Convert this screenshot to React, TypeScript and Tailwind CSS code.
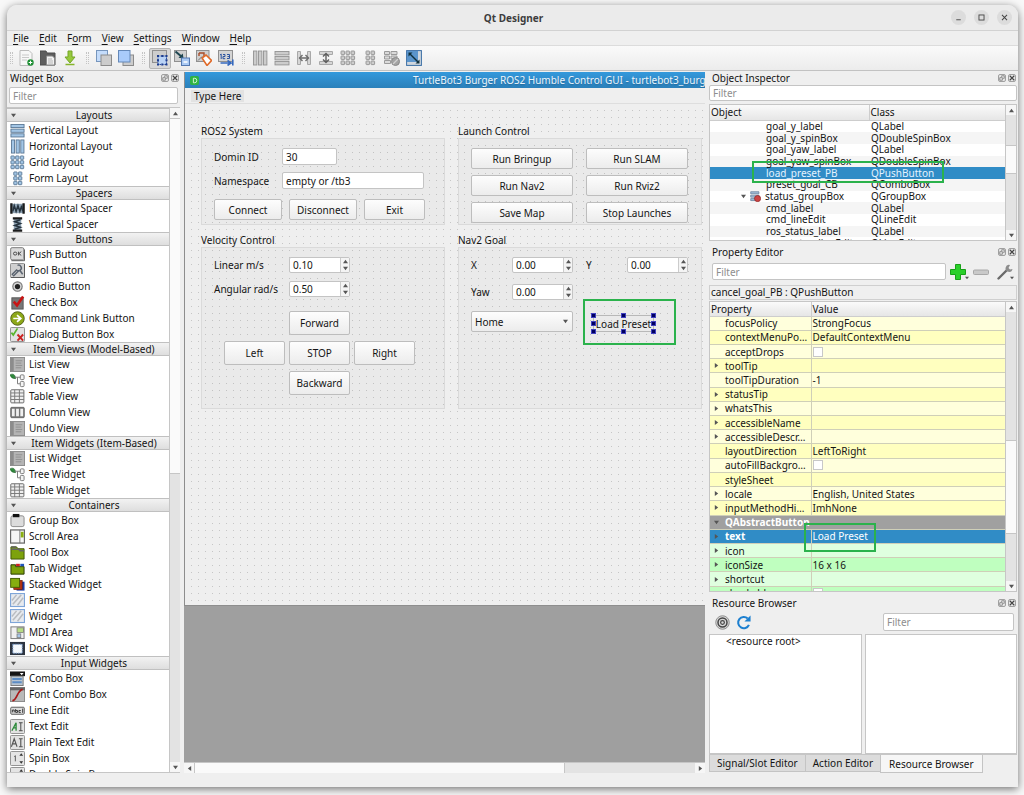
import type { ReactNode } from "react";
import clsx from "clsx";

type IconProps = { children: ReactNode; className?: string };

function Icon({ children, className }: IconProps) {
  return (
    <svg viewBox="0 0 16 16" aria-hidden="true" className={clsx("shrink-0", className ?? "size-[15px]")}>
      {children}
    </svg>
  );
}

function Arrow({ dir, className }: { dir: "up" | "down" | "left" | "right"; className?: string }) {
  const points = {
    up: "0,5 3,1 6,5",
    down: "0,1 6,1 3,5",
    left: "5,0 1,3 5,6",
    right: "1,0 5,3 1,6",
  };
  return (
    <svg viewBox="0 0 6 6" aria-hidden="true" className={clsx("shrink-0 fill-[#555]", className ?? "size-[5px]")}>
      <polygon points={points[dir]} />
    </svg>
  );
}

/* ---------- icon drawings ---------- */

function Frame16({ fill = "#d6d6d6" }: { fill?: string }) {
  return <rect x="0.5" y="0.5" width="15" height="15" rx="1" fill={fill} stroke="#8b8b8b" />;
}

function Bars({ vertical, fill, stroke }: { vertical?: boolean; fill: string; stroke: string }) {
  return (
    <>
      {[1, 6, 11].map((p) =>
        vertical ? (
          <rect key={p} x={p + 0.5} y="1" width="3.4" height="14" fill={fill} stroke={stroke} strokeWidth="0.9" />
        ) : (
          <rect key={p} x="1" y={p + 0.5} width="14" height="3.4" fill={fill} stroke={stroke} strokeWidth="0.9" />
        ),
      )}
    </>
  );
}

function Cells({ cols, fill, stroke }: { cols: number[]; fill: string; stroke: string }) {
  return (
    <>
      {cols.map((x) =>
        [1, 6, 11].map((y) => (
          <rect key={`${x}-${y}`} x={x} y={y} width="3.6" height="3.6" rx="0.6" fill={fill} stroke={stroke} strokeWidth="0.9" />
        )),
      )}
    </>
  );
}

const BLUE = { fill: "#a3c6e6", stroke: "#54728f" };
const GREY = { fill: "#cccccc", stroke: "#939393" };

const listIcon = (
  <>
    <rect x="0.5" y="0.5" width="15" height="15" fill="#b4b4b4" stroke="#8a8a8a" />
    <rect x="1" y="1" width="3" height="14" fill="#8c8c8c" />
    <path d="M6 4h7M6 6.5h6M6 9h7M6 11.5h6" stroke="#8f8f8f" />
  </>
);
const treeIcon = (
  <>
    <path d="M0 2c3-2 6 0 6 4C3 6 1 5 0 2z" fill="#2f8a3c" stroke="#1d5c28" strokeWidth="0.6" />
    <path d="M5 4.5h6M8 4.5v7h3" fill="none" stroke="#777" />
    <rect x="11" y="2" width="4" height="5" rx="1" fill="#f4f4f4" stroke="#777" />
    <rect x="11" y="9" width="4" height="5.5" rx="1" fill="#f4f4f4" stroke="#777" />
  </>
);
const tableIcon = (
  <>
    <rect x="0.8" y="0.8" width="14" height="14" rx="1" fill="#efefef" stroke="#666" />
    <path d="M1 4.2h14M1 7.7h14M1 11.2h14M5 1v14M10 1v14" stroke="#777" />
  </>
);
const hatchIcon = (
  <>
    <rect x="0.6" y="0.6" width="14.8" height="13.8" fill="#e7eaee" stroke="#7ea5d8" strokeWidth="1.2" />
    <path d="M2 8l5-6M3 12l9-10M8 13l6-8" stroke="#b9bcc0" strokeWidth="1.6" />
  </>
);

const widgetIcons: Record<string, ReactNode> = {
  "Vertical Layout": <Bars {...BLUE} />,
  "Horizontal Layout": <Bars vertical {...BLUE} />,
  "Grid Layout": <Cells cols={[1, 6, 11]} {...BLUE} />,
  "Form Layout": <Cells cols={[4, 9]} {...BLUE} />,
  "Horizontal Spacer": (
    <>
      <rect x="0.5" y="3" width="15" height="10" fill="#8fa3b4" />
      <path d="M1.5 2.5v11M14.5 2.5v11" stroke="#1c1c1c" strokeWidth="2.4" />
      <path d="M3 11l1.500-6 2 6 2-6 2 6 2-6 1 6" fill="none" stroke="#26343f" strokeWidth="1.6" />
    </>
  ),
  "Vertical Spacer": (
    <>
      <rect x="4" y="1" width="8" height="14" fill="#8fa3b4" />
      <path d="M3 1.5h10M3 14.5h10" stroke="#1c1c1c" strokeWidth="2.4" />
      <path d="M11 3L5 5l6 2-6 2 6 2-6 2" fill="none" stroke="#26343f" strokeWidth="1.6" />
    </>
  ),
  "Push Button": (
    <>
      <rect x="0.7" y="0.7" width="14" height="13" rx="1.5" fill="#dadada" stroke="#777" />
      <path d="M1.5 14.6h14v-12" fill="none" stroke="#555" />
      <ellipse cx="5.5" cy="7" rx="1.8" ry="1.6" fill="none" stroke="#444" />
      <path d="M9 5v4M12 5L9.5 7 12 9" fill="none" stroke="#444" />
    </>
  ),
  "Tool Button": (
    <>
      <Frame16 fill="#d0d0d0" />
      <path d="M15.5 1v14.5H1" fill="none" stroke="#555" />
      <path d="M8 2.5a3 3 0 1 1-1 5L2.5 12 4 13.500l5-5M11 8.500l2.500 3.500" fill="none" stroke="#5b6470" strokeWidth="1.6" />
    </>
  ),
  "Radio Button": (
    <>
      <circle cx="8" cy="8" r="5" fill="#d6d6d6" stroke="#777" strokeWidth="1.2" />
      <circle cx="8" cy="8" r="2.8" fill="#222" />
    </>
  ),
  "Check Box": (
    <>
      <rect x="2" y="3" width="12" height="12" fill="#777" stroke="#555" />
      <path d="M4 7l3.500 4L14 1.500" fill="none" stroke="#c81414" strokeWidth="2.8" />
    </>
  ),
  "Command Link Button": (
    <>
      <circle cx="8" cy="8" r="7.200" fill="#8da818" stroke="#4f5f16" />
      <path d="M3.500 8h7M7.500 4.500L11.500 8l-4 3.500" fill="none" stroke="#fff" strokeWidth="1.8" />
    </>
  ),
  "Dialog Button Box": (
    <>
      <Frame16 fill="#e2e2e2" />
      <path d="M1.500 6l2 2.500L8 1.500" fill="none" stroke="#58b52c" strokeWidth="1.800" />
      <path d="M8 8l6 6.500M14 8l-6 6.500" stroke="#cc2222" strokeWidth="2" />
    </>
  ),
  "List View": listIcon,
  "Tree View": treeIcon,
  "Table View": tableIcon,
  "Column View": (
    <>
      <rect x="0.800" y="2.500" width="14.400" height="11" rx="1" fill="#777" stroke="#666" />
      <path d="M2 4h3v8H2zM6.500 4h3v8h-3zM11 4h3v8h-3z" fill="#f0f0f0" />
    </>
  ),
  "Undo View": listIcon,
  "List Widget": listIcon,
  "Tree Widget": treeIcon,
  "Table Widget": tableIcon,
  "Group Box": (
    <>
      <rect x="1" y="3" width="14" height="11.500" rx="2" fill="#dcdcdc" stroke="#888" />
      <rect x="3" y="1" width="7" height="3.500" fill="#111" />
    </>
  ),
  "Scroll Area": (
    <>
      <rect x="0.600" y="1" width="14.800" height="14" fill="#f6f6f6" stroke="#666" strokeWidth="1.300" />
      <path d="M10.500 1v14" stroke="#777" />
      <rect x="11.500" y="3" width="3" height="6" fill="#8bb012" />
    </>
  ),
  "Tool Box": (
    <>
      <path d="M1 2h6l1.500 2H15v11H1z" fill="#7da20c" stroke="#3f5405" />
      <path d="M1.500 2h5M1.500 4.500h8l1 1.500H15" fill="none" stroke="#666" strokeWidth="1.600" />
    </>
  ),
  "Tab Widget": (
    <>
      <path d="M1 4h5v2h9v8H1z" fill="#7da20c" stroke="#263800" />
      <rect x="6.500" y="3" width="4" height="2.500" fill="#c22" />
      <rect x="11" y="3" width="4" height="2.500" fill="#2255bb" />
    </>
  ),
  "Stacked Widget": (
    <>
      <rect x="7" y="5" width="8.500" height="9.500" fill="#1c3fa8" />
      <rect x="4" y="3.500" width="9" height="10" fill="#b53214" stroke="#601505" strokeWidth="0.600" />
      <rect x="0.700" y="1.500" width="9.500" height="9.500" fill="#86ae10" stroke="#445c05" />
    </>
  ),
  Frame: hatchIcon,
  Widget: hatchIcon,
  "MDI Area": (
    <>
      <rect x="1" y="2" width="14" height="12.500" fill="#f0f0f0" stroke="#777" />
      <rect x="7.500" y="3" width="7" height="5" fill="#b7dc84" stroke="#777" strokeWidth="0.800" />
      <rect x="7.500" y="9.500" width="4" height="4" fill="#a8c8ea" stroke="#777" strokeWidth="0.800" />
    </>
  ),
  "Dock Widget": (
    <>
      <rect x="0" y="1" width="16" height="14" fill="#2d3440" />
      <rect x="3" y="3.500" width="10" height="9.500" fill="#f4f8fc" stroke="#7a9fd0" strokeDasharray="1.500 1" />
    </>
  ),
  "Combo Box": (
    <>
      <rect x="0" y="0.500" width="16" height="5" fill="#151515" />
      <path d="M10.500 2h4l-2 2.500z" fill="#fff" />
      <rect x="1" y="5.500" width="13" height="10" fill="#b8c4d0" stroke="#777" />
      <path d="M2.500 8.500h10M2.500 12h10" stroke="#5c8cc4" strokeWidth="2" />
    </>
  ),
  "Font Combo Box": (
    <>
      <rect x="0.500" y="0.500" width="15" height="15" fill="#b9b9b9" stroke="#888" />
      <path d="M0 2h16" stroke="#666" strokeWidth="3" />
      <path d="M2.500 14.500c5 0 5-11 11-12" fill="none" stroke="#a81818" strokeWidth="1.800" />
    </>
  ),
  "Line Edit": (
    <>
      <rect x="0.800" y="4.500" width="14.400" height="7.500" rx="1" fill="#dcdcdc" stroke="#555" />
      <path d="M2.500 10V7.500h2V10M6 6.500V10h2V8H6M11.500 8h-2v2h2M13.500 6v4.500" fill="none" stroke="#333" />
    </>
  ),
  "Text Edit": (
    <>
      <Frame16 fill="#e2e2e2" />
      <path d="M2 12.500L6.500 4v8.500M3.500 9.500h3" fill="none" stroke="#2c8a3a" strokeWidth="1.400" />
      <path d="M9.500 4h4M11.500 4v8.500M9.500 12.500h4" fill="none" stroke="#444" />
    </>
  ),
  "Plain Text Edit": (
    <>
      <Frame16 fill="#e2e2e2" />
      <path d="M1.500 12.500L4.500 4l3 8.500M3 9.500h3.500M9.500 4h4M11.500 4v8.500M9.500 12.500h4" fill="none" stroke="#555" strokeWidth="1.200" />
    </>
  ),
  "Spin Box": (
    <>
      <Frame16 fill="#e4e4e4" />
      <path d="M4.500 6l1.200-1v6" fill="none" stroke="#555" />
      <path d="M10 5l2-2.500L14 5zM10 11l2 2.500L14 11z" fill="#333" />
    </>
  ),
  "Double Spin Box": (
    <>
      <Frame16 fill="#e4e4e4" />
      <path d="M10 5l2-2.500L14 5z" fill="#333" />
    </>
  ),
};

const toolGroups: { label: string; active?: boolean; art: ReactNode }[][] = [
  [
    {
      label: "New",
      art: (
        <>
          <path d="M2 .5h9l3 3v12H2z" fill="#f7f7f7" stroke="#bbb" />
          <path d="M4 5h7M4 7.500h7M4 10h5" stroke="#c9c9c9" />
          <circle cx="12.500" cy="12.500" r="3.200" fill="#1f8f35" />
          <path d="M12.500 10.700v3.600M10.700 12.500h3.600" stroke="#fff" />
        </>
      ),
    },
    {
      label: "Open",
      art: (
        <>
          <path d="M0 1h6l1 2h8v12H0z" fill="#5e5e5e" stroke="#4c4c4c" />
          <path d="M6.500 6h6l2 2v7h-8z" fill="#f2f2f2" stroke="#888" />
          <path d="M8 9h4M8 11h5M8 13h5" stroke="#b5b5b5" />
        </>
      ),
    },
    {
      label: "Save",
      art: (
        <>
          <path d="M6 1h4v6h3l-5 6-5-6h3z" fill="#97c93d" stroke="#75a526" />
          <path d="M3.500 14.500h9" stroke="#86b52d" strokeWidth="1.500" />
        </>
      ),
    },
  ],
  [
    {
      label: "Send to Back",
      art: (
        <>
          <rect x="0.500" y="0.500" width="11" height="11" fill="#c4dcfb" stroke="#7796bd" />
          <rect x="5" y="5" width="10.500" height="10.500" fill="#cccccc" stroke="#8b8b8b" />
        </>
      ),
    },
    {
      label: "Bring to Front",
      art: (
        <>
          <rect x="5" y="5" width="10.500" height="10.500" fill="#cccccc" stroke="#8b8b8b" />
          <rect x="0.500" y="0.500" width="11.500" height="11.500" fill="#a9cbfa" stroke="#6488b8" />
        </>
      ),
    },
  ],
  [
    {
      label: "Edit Widgets",
      active: true,
      art: (
        <>
          <rect x="0.500" y="0.500" width="14" height="12" fill="#cdcdcd" stroke="#909090" />
          <rect x="6" y="6" width="8.500" height="8.500" fill="#b9d2f5" stroke="#2b4fa0" strokeDasharray="1.500 1" />
          <path d="M5 5h2v2H5zM9.300 5h2v2h-2zM13.500 5h2v2h-2zM5 9.300h2v2H5zM13.500 9.300h2v2h-2zM5 13.500h2v2H5zM9.300 13.500h2v2h-2zM13.500 13.500h2v2h-2z" fill="#1d3c8f" />
        </>
      ),
    },
    {
      label: "Edit Signals/Slots",
      art: (
        <>
          <rect x="0.500" y="0.500" width="12" height="11" fill="#cfcfcf" stroke="#909090" />
          <path d="M1.500 1.500L8 7" stroke="#1e4550" strokeWidth="2" />
          <path d="M9.500 8.500L4.500 7.800 8.800 3.500z" fill="#1e4550" />
          <rect x="7.500" y="8" width="8" height="7.500" fill="#a9c9f4" stroke="#5478b0" />
          <path d="M9.500 12h4" stroke="#fff" strokeWidth="1.300" />
        </>
      ),
    },
    {
      label: "Edit Buddies",
      art: (
        <>
          <rect x="0.500" y="0.500" width="12.500" height="11" fill="#cfcfcf" stroke="#909090" />
          <path d="M3 3h5v3M3 3v3" fill="none" stroke="#a84d2b" strokeWidth="1.400" />
          <path d="M6 8l4-3 5.500 5.500-4.500 5z" fill="#fff" stroke="#e06a28" strokeWidth="1.600" />
          <path d="M2 10.500l4-4" stroke="#777" />
        </>
      ),
    },
    {
      label: "Edit Tab Order",
      art: (
        <>
          <rect x="0.500" y="0.500" width="14" height="11" fill="#d4d4d4" stroke="#909090" />
          <path d="M2 5l1.200-1v5M5 4.500h2v2H5v2.200h2.200M9 4.500h2.500v4H9M9.500 6.500h2" fill="none" stroke="#2d54a0" />
          <path d="M2.500 13h9M9.500 10.500l3.500 2.500-3.500 2.500M14.800 9.500v6" fill="none" stroke="#3568bd" strokeWidth="1.600" />
        </>
      ),
    },
  ],
  [
    { label: "Lay Out Horizontally", art: <Bars vertical {...GREY} /> },
    { label: "Lay Out Vertically", art: <Bars {...GREY} /> },
    {
      label: "Lay Out Horizontally in Splitter",
      art: (
        <>
          <path d="M1.500 1.500h3v13h-3zM11.500 1.500h3v13h-3z" fill="#d6d6d6" stroke="#a8a8a8" />
          <path d="M3 8h10M6.500 5L3.500 8l3 3M9.500 5l3 3-3 3" fill="none" stroke="#6e6e6e" strokeWidth="1.400" />
        </>
      ),
    },
    {
      label: "Lay Out Vertically in Splitter",
      art: (
        <>
          <path d="M1.500 1.500h13v3h-13zM1.500 11.500h13v3h-13z" fill="#d6d6d6" stroke="#a8a8a8" />
          <path d="M8 3v10M5 6.500l3-3 3 3M5 9.500l3 3 3-3" fill="none" stroke="#5e5e5e" strokeWidth="1.400" />
        </>
      ),
    },
    { label: "Lay Out in a Grid", art: <Cells cols={[1, 6, 11]} {...GREY} /> },
    { label: "Lay Out in a Form Layout", art: <Cells cols={[4, 9]} {...GREY} /> },
    {
      label: "Break Layout",
      art: (
        <>
          <path d="M.5 1.500h5v3h-5zM7 1.500h6v3H7zM.5 6h5v3h-5zM7 6h6v3H7zM.5 10.500h6v3h-6z" fill="#dadada" stroke="#9a9a9a" />
          <circle cx="11.500" cy="11.500" r="4" fill="#a3a3a3" stroke="#888" />
          <path d="M9 14l5-5" stroke="#d0d0d0" strokeWidth="1.200" />
        </>
      ),
    },
    {
      label: "Adjust Size",
      art: (
        <>
          <rect x="0.600" y="0.600" width="14.800" height="14.800" fill="#cfd6de" stroke="#3a6ea5" />
          <rect x="1" y="1" width="11" height="11" fill="#5b95cc" />
          <path d="M4 4l8 8" stroke="#10303c" strokeWidth="1.500" />
          <path d="M2.500 2.500h4l-4 4zM13.500 13.500h-4l4-4z" fill="#10303c" />
        </>
      ),
    },
  ],
];

/* ---------- data ---------- */

const menus: [string, string, string][] = [
  ["", "F", "ile"],
  ["", "E", "dit"],
  ["F", "o", "rm"],
  ["", "V", "iew"],
  ["", "S", "ettings"],
  ["", "W", "indow"],
  ["", "H", "elp"],
];

const widgetBox = [
  { title: "Layouts", items: ["Vertical Layout", "Horizontal Layout", "Grid Layout", "Form Layout"] },
  { title: "Spacers", items: ["Horizontal Spacer", "Vertical Spacer"] },
  {
    title: "Buttons",
    items: ["Push Button", "Tool Button", "Radio Button", "Check Box", "Command Link Button", "Dialog Button Box"],
  },
  { title: "Item Views (Model-Based)", items: ["List View", "Tree View", "Table View", "Column View", "Undo View"] },
  { title: "Item Widgets (Item-Based)", items: ["List Widget", "Tree Widget", "Table Widget"] },
  {
    title: "Containers",
    items: [
      "Group Box",
      "Scroll Area",
      "Tool Box",
      "Tab Widget",
      "Stacked Widget",
      "Frame",
      "Widget",
      "MDI Area",
      "Dock Widget",
    ],
  },
  {
    title: "Input Widgets",
    items: ["Combo Box", "Font Combo Box", "Line Edit", "Text Edit", "Plain Text Edit", "Spin Box", "Double Spin Box"],
  },
];

const objects = [
  { name: "goal_y_label", cls: "QLabel" },
  { name: "goal_y_spinBox", cls: "QDoubleSpinBox" },
  { name: "goal_yaw_label", cls: "QLabel" },
  { name: "goal_yaw_spinBox", cls: "QDoubleSpinBox" },
  { name: "load_preset_PB", cls: "QPushButton", selected: true },
  { name: "preset_goal_CB", cls: "QComboBox" },
  { name: "status_groupBox", cls: "QGroupBox", group: true },
  { name: "cmd_label", cls: "QLabel" },
  { name: "cmd_lineEdit", cls: "QLineEdit" },
  { name: "ros_status_label", cls: "QLabel" },
  { name: "ros_status_lineEdit", cls: "QLineEdit" },
];

type Property = {
  name: string;
  value?: string;
  check?: boolean;
  expand?: boolean;
  tone: "light" | "dark" | "greenLight" | "greenDark" | "section" | "selected";
};

const properties: Property[] = [
  { name: "focusPolicy", value: "StrongFocus", tone: "light" },
  { name: "contextMenuPo…", value: "DefaultContextMenu", tone: "dark" },
  { name: "acceptDrops", check: true, tone: "light" },
  { name: "toolTip", expand: true, tone: "dark" },
  { name: "toolTipDuration", value: "-1", tone: "light" },
  { name: "statusTip", expand: true, tone: "dark" },
  { name: "whatsThis", expand: true, tone: "light" },
  { name: "accessibleName", expand: true, tone: "dark" },
  { name: "accessibleDescr…", expand: true, tone: "light" },
  { name: "layoutDirection", value: "LeftToRight", tone: "dark" },
  { name: "autoFillBackgro…", check: true, tone: "light" },
  { name: "styleSheet", tone: "dark" },
  { name: "locale", value: "English, United States", expand: true, tone: "light" },
  { name: "inputMethodHi…", value: "ImhNone", expand: true, tone: "dark" },
  { name: "QAbstractButton", tone: "section" },
  { name: "text", value: "Load Preset", expand: true, tone: "selected" },
  { name: "icon", expand: true, tone: "greenLight" },
  { name: "iconSize", value: "16 x 16", expand: true, tone: "greenDark" },
  { name: "shortcut", expand: true, tone: "greenLight" },
  { name: "checkable", check: true, tone: "greenDark" },
];

const toneClass: Record<Property["tone"], string> = {
  light: "bg-[#ffffdc]",
  dark: "bg-[#ffffbf]",
  greenLight: "bg-[#dfffdf]",
  greenDark: "bg-[#bfffbf]",
  section: "bg-[#a0a0a0] font-bold text-white",
  selected: "bg-[#308cc6] text-white",
};

/* ---------- shared controls ---------- */

const fieldClass = "rounded-xs border border-[#c4c4c4] bg-white px-[3px] outline-none placeholder:text-[#8e8e8e]";

function PushButton({ children, className }: { children: ReactNode; className?: string }) {
  return (
    <button
      type="button"
      className={clsx(
        "rounded-xs border border-[#bdbdbd] bg-linear-to-b from-[#fdfdfd] to-[#ececec] text-center whitespace-nowrap",
        className,
      )}
    >
      {children}
    </button>
  );
}

function SpinBox({ id, value }: { id: string; value: string }) {
  return (
    <div className="flex h-4 w-[61px] overflow-hidden rounded-xs border border-[#c4c4c4] bg-white">
      <input id={id} defaultValue={value} className="w-0 flex-1 px-[3px] outline-none" />
      <div className="flex w-[9px] flex-col border-l border-[#ccc] bg-[#f4f4f4]">
        <button type="button" aria-label="Increase" className="flex flex-1 items-center justify-center">
          <Arrow dir="up" />
        </button>
        <button type="button" aria-label="Decrease" className="flex flex-1 items-center justify-center">
          <Arrow dir="down" />
        </button>
      </div>
    </div>
  );
}

type ScrollBarProps = { horizontal?: boolean; before: number; thumb: number; after: number };

function ScrollBar({ horizontal, before, thumb, after }: ScrollBarProps) {
  const endClass = "flex size-[10px] shrink-0 items-center justify-center bg-[#f6f6f6]";
  return (
    <div
      className={clsx(
        "flex shrink-0 border-[#c6c6c6] bg-[#e3e3e3]",
        horizontal ? "h-[11px] border-t" : "w-[11px] flex-col border-l",
      )}
    >
      <button type="button" aria-label="Scroll back" className={endClass}>
        <Arrow dir={horizontal ? "left" : "up"} />
      </button>
      <div style={{ flexGrow: before }} />
      <div
        className={clsx("border-[#c6c6c6] bg-[#fafafa]", horizontal ? "border-x" : "border-y")}
        style={{ flexGrow: thumb }}
      />
      <div style={{ flexGrow: after }} />
      <button type="button" aria-label="Scroll forward" className={endClass}>
        <Arrow dir={horizontal ? "right" : "down"} />
      </button>
    </div>
  );
}

function DockTitle({ title }: { title: string }) {
  const btn = "flex size-[8px] items-center justify-center rounded-xs border border-[#a0a0a0] bg-[#e6e6e6]";
  return (
    <div className="flex h-[14px] shrink-0 items-center gap-[2px] pr-px pl-[3px]">
      <h2 className="flex-1">{title}</h2>
      <button type="button" aria-label={`Float ${title}`} className={btn}>
        <Icon className="size-[6px]">
          <path d="M2 7h7v7H2zM7 5V2h7v7h-3" fill="none" stroke="#777" strokeWidth="2" />
        </Icon>
      </button>
      <button type="button" aria-label={`Close ${title}`} className={btn}>
        <Icon className="size-[6px]">
          <path d="M2 2l12 12M14 2L2 14" stroke="#444" strokeWidth="3" />
        </Icon>
      </button>
    </div>
  );
}

/* ---------- top bars ---------- */

function TitleBar() {
  const btn = "flex size-[15px] items-center justify-center rounded-full bg-[#dcdcdc]";
  return (
    <header className="grid h-[26px] shrink-0 grid-cols-[1fr_auto_1fr] items-center border-b border-[#d2d2d2] bg-[#ebebeb] pr-[6px] pl-2">
      <h1 className="col-start-2 font-bold text-[#3d3d3d]">Qt Designer</h1>
      <div className="flex justify-end gap-2">
        <button type="button" aria-label="Minimize" className={btn}>
          <Icon className="size-[9px]">
            <path d="M4 12h8" stroke="#444" strokeWidth="1.600" />
          </Icon>
        </button>
        <button type="button" aria-label="Maximize" className={btn}>
          <Icon className="size-[9px]">
            <rect x="3.500" y="3.500" width="9" height="9" fill="none" stroke="#444" strokeWidth="1.600" />
          </Icon>
        </button>
        <button type="button" aria-label="Close" className={btn}>
          <Icon className="size-[9px]">
            <path d="M3.500 3.500l9 9M12.500 3.500l-9 9" stroke="#444" strokeWidth="1.800" />
          </Icon>
        </button>
      </div>
    </header>
  );
}

function MenuBar() {
  return (
    <nav className="flex h-[15px] shrink-0 items-center gap-[10px] border-b border-[#dcdcdc] px-[6px]">
      {menus.map(([pre, key, post]) => (
        <button key={pre + key + post} type="button">
          {pre}
          <span className="underline underline-offset-2">{key}</span>
          {post}
        </button>
      ))}
    </nav>
  );
}

function ToolBar() {
  return (
    <div className="flex h-[25px] shrink-0 items-center border-b border-[#c2c2c2] bg-linear-to-b from-[#fafafa] to-[#ececec]">
      {toolGroups.map((group, i) => (
        <div key={i} className="group flex items-center">
          <span className="flex w-3 justify-center group-first:w-2">
            <span className="h-3 w-[3px] border-x border-dotted border-[#c4c4c4]" />
          </span>
          {group.map((tool) => (
            <button
              key={tool.label}
              type="button"
              aria-label={tool.label}
              className={clsx(
                "flex h-[21px] w-[22px] items-center justify-center rounded-xs border",
                tool.active ? "border-[#b4b4b4] bg-[#d8d8d8]" : "border-transparent",
              )}
            >
              <Icon className="size-4">{tool.art}</Icon>
            </button>
          ))}
        </div>
      ))}
    </div>
  );
}

/* ---------- left dock ---------- */

function WidgetBox() {
  return (
    <aside className="flex w-[173px] shrink-0 flex-col">
      <DockTitle title="Widget Box" />
      <input
        aria-label="Filter widgets"
        placeholder="Filter"
        className={clsx(fieldClass, "mx-[2px] mt-[2px] mb-[3px] h-[17px] shrink-0")}
      />
      <div className="flex min-h-0 flex-1 border-y border-[#c6c6c6] bg-white">
        <div className="min-w-0 flex-1 overflow-hidden">
          {widgetBox.map((category) => (
            <section key={category.title}>
              <h3 className="flex h-[14px] items-center gap-[3px] border-y border-[#c0c0c0] bg-linear-to-b from-[#f2f2f2] to-[#dedede] pl-1 leading-3">
                <Arrow dir="down" />
                <span className="flex-1 text-center">{category.title}</span>
              </h3>
              <ul>
                {category.items.map((item) => (
                  <li key={item} className="flex h-4 items-center gap-1 pl-[3px] whitespace-nowrap">
                    <Icon>{widgetIcons[item]}</Icon>
                    {item}
                  </li>
                ))}
              </ul>
            </section>
          ))}
        </div>
        <ScrollBar before={0} thumb={356} after={290} />
      </div>
    </aside>
  );
}

/* ---------- form being edited ---------- */

function GroupBox({ title, children, className }: { title: string; children: ReactNode; className: string }) {
  return (
    <section>
      <h3 className="h-[14px] leading-[14px]">{title}</h3>
      <div className={clsx("border border-[#dadada] bg-black/2 px-3", className)}>{children}</div>
    </section>
  );
}

function SelectedButton() {
  const handle = "absolute size-[5px] border border-[#4040c0] bg-[#000060]";
  return (
    <div className="relative ml-[7px] h-[17px] w-[61px]">
      <button type="button" className="size-full border border-[#b8b8b8] text-center whitespace-nowrap">
        Load Preset
      </button>
      <span className={clsx(handle, "-top-[2px] -left-[2px]")} />
      <span className={clsx(handle, "-top-[2px] left-[28px]")} />
      <span className={clsx(handle, "-top-[2px] -right-[2px]")} />
      <span className={clsx(handle, "top-[6px] -left-[2px]")} />
      <span className={clsx(handle, "top-[6px] -right-[2px]")} />
      <span className={clsx(handle, "-bottom-[2px] -left-[2px]")} />
      <span className={clsx(handle, "-bottom-[2px] left-[28px]")} />
      <span className={clsx(handle, "-right-[2px] -bottom-[2px]")} />
      <span className="absolute -top-4 -left-[10px] h-[46px] w-[93px] border-2 border-[#2bb24c]" />
    </div>
  );
}

function FormCanvas() {
  return (
    <div className="flex h-[501px] gap-[13px] overflow-hidden bg-[linear-gradient(90deg,#efefef_6px,transparent_6px),linear-gradient(#efefef_6px,#c6c6c6_6px)] bg-[size:7px_7px] pt-5 pl-4">
      <div className="flex w-[244px] shrink-0 flex-col gap-2">
        <GroupBox title="ROS2 System" className="h-[87px] pt-[9px]">
          <div className="grid grid-cols-[68px_142px] items-center gap-y-[7px]">
            <label htmlFor="domain">Domin ID</label>
            <input id="domain" defaultValue="30" className={clsx(fieldClass, "h-[17px] w-[55px]")} />
            <label htmlFor="namespace">Namespace</label>
            <input id="namespace" defaultValue="empty or /tb3" className={clsx(fieldClass, "h-[17px]")} />
          </div>
          <div className="mt-[10px] flex gap-[7px]">
            <PushButton className="h-[21px] w-[68px]">Connect</PushButton>
            <PushButton className="h-[21px] w-[68px]">Disconnect</PushButton>
            <PushButton className="h-[21px] w-[61px]">Exit</PushButton>
          </div>
        </GroupBox>
        <GroupBox title="Velocity Control" className="h-[162px] pt-[9px]">
          <div className="grid grid-cols-[75px_61px] items-center gap-y-2">
            <label htmlFor="linear">Linear m/s</label>
            <SpinBox id="linear" value="0.10" />
            <label htmlFor="angular" className="whitespace-nowrap">
              Angular rad/s
            </label>
            <SpinBox id="angular" value="0.50" />
          </div>
          <div className="mt-[14px] ml-[10px] grid grid-cols-[61px_61px_61px] gap-x-1 gap-y-[6px]">
            <PushButton className="col-start-2 h-6">Forward</PushButton>
            <PushButton className="col-start-1 h-6">Left</PushButton>
            <PushButton className="h-6">STOP</PushButton>
            <PushButton className="h-6">Right</PushButton>
            <PushButton className="col-start-2 h-6">Backward</PushButton>
          </div>
        </GroupBox>
      </div>

      <div className="flex w-[244px] shrink-0 flex-col gap-2">
        <GroupBox title="Launch Control" className="h-[87px] pt-[9px]">
          <div className="grid grid-cols-[102px_102px] gap-x-[13px] gap-y-[6px]">
            {["Run Bringup", "Run SLAM", "Run Nav2", "Run Rviz2", "Save Map", "Stop Launches"].map((label) => (
              <PushButton key={label} className="h-[21px]">
                {label}
              </PushButton>
            ))}
          </div>
        </GroupBox>
        <GroupBox title="Nav2 Goal" className="h-[162px] pt-[9px]">
          <div className="grid grid-cols-[102px_102px] gap-x-[13px] gap-y-[11px]">
            <div className="flex items-center justify-between">
              <label htmlFor="goal-x">X</label>
              <SpinBox id="goal-x" value="0.00" />
            </div>
            <div className="flex items-center justify-between">
              <label htmlFor="goal-y">Y</label>
              <SpinBox id="goal-y" value="0.00" />
            </div>
            <div className="flex items-center justify-between">
              <label htmlFor="goal-yaw">Yaw</label>
              <SpinBox id="goal-yaw" value="0.00" />
            </div>
            <div className="relative col-start-1 flex items-center">
              <select
                aria-label="Preset goal"
                className="h-[21px] w-full appearance-none rounded-xs border border-[#bdbdbd] bg-linear-to-b from-[#fdfdfd] to-[#ececec] pl-[3px]"
              >
                <option>Home</option>
              </select>
              <Arrow dir="down" className="pointer-events-none absolute right-[5px] size-[5px]" />
            </div>
            <div className="flex items-end">
              <SelectedButton />
            </div>
          </div>
        </GroupBox>
      </div>
    </div>
  );
}

function MdiArea() {
  return (
    <main className="flex min-w-0 flex-1 flex-col pt-px">
      <div className="min-h-0 flex-1 overflow-hidden bg-[#9f9f9f]">
        <div className="border-b border-l border-[#8e8e8e] bg-[#efefef]">
          <div className="flex h-4 items-center overflow-hidden bg-linear-to-b from-[#3499dc] to-[#2b80ba] pl-1 whitespace-nowrap text-[#eaf4fb]">
            <Icon className="h-[9px] w-[11px]">
              <rect x="0" y="0" width="16" height="16" rx="3" fill="#2fb344" />
              <path d="M6 4h2.500a3.500 4 0 0 1 0 8H6z" fill="none" stroke="#e6ffe6" strokeWidth="1.500" />
            </Icon>
            <span className="ml-[213px] text-shadow-sm">TurtleBot3 Burger ROS2 Humble Control GUI - turtlebot3_burger</span>
          </div>
          <div className="flex h-4 items-center border-b border-[#dedede] px-[6px]">
            <button type="button" className="bg-[#e2e2e2] px-[3px] leading-3">
              Type Here
            </button>
          </div>
          <FormCanvas />
        </div>
      </div>
      <ScrollBar horizontal before={0} thumb={370} after={131} />
    </main>
  );
}

/* ---------- right docks ---------- */

function ObjectInspector() {
  return (
    <section className="flex shrink-0 flex-col">
      <DockTitle title="Object Inspector" />
      <input
        aria-label="Filter objects"
        placeholder="Filter"
        className={clsx(fieldClass, "mb-[3px] h-[16px] shrink-0")}
      />
      <div className="relative flex h-[137px] border border-[#c6c6c6] bg-white">
        <div className="min-w-0 flex-1 overflow-hidden">
          <table className="h-[144px] w-full table-fixed border-collapse text-left leading-[11px]">
            <thead>
              <tr className="h-[15px] bg-linear-to-b from-[#fafafa] to-[#e6e6e6]">
                <th className="w-[159px] border-r border-b border-[#cdcdcd] px-px font-normal">Object</th>
                <th className="border-b border-[#cdcdcd] px-px font-normal">Class</th>
              </tr>
            </thead>
            <tbody>
              {objects.map((o, i) => (
                <tr
                  key={o.name}
                  className={clsx(
                    o.selected ? "bg-[#308cc6] text-[#e4f3ff]" : i % 2 === 1 ? "bg-[#f5f5f5]" : "bg-white",
                  )}
                >
                  <td className={clsx("p-0", o.group ? "pl-[31px]" : "pl-[56px]")}>
                    {o.group ? (
                      <span className="flex items-center gap-1">
                        <Arrow dir="down" />
                        <Icon className="size-[11px]">
                          <path d="M1 1h12v3H1zM1 6h12v3H1zM1 11h7v3H1z" fill="#9fbcd8" stroke="#5d7892" />
                          <circle cx="11" cy="11" r="4.500" fill="#cc4444" stroke="#8c2222" />
                        </Icon>
                        {o.name}
                      </span>
                    ) : (
                      o.name
                    )}
                  </td>
                  <td className="p-0 pl-[2px]">{o.cls}</td>
                </tr>
              ))}
            </tbody>
          </table>
        </div>
        <ScrollBar before={31} thumb={27} after={58} />
        <span className="pointer-events-none absolute top-[56px] left-[42px] h-[22px] w-[192px] border-2 border-[#2bb24c]" />
      </div>
    </section>
  );
}

function PropertyEditor() {
  return (
    <section className="mt-1 flex min-h-0 flex-1 flex-col">
      <DockTitle title="Property Editor" />
      <div className="mt-1 flex h-[17px] shrink-0 items-center pr-[3px] pl-[3px]">
        <input aria-label="Filter properties" placeholder="Filter" className={clsx(fieldClass, "h-[17px] w-0 flex-1")} />
        <div className="flex items-center gap-[4px] pl-1">
          <button type="button" aria-label="Add dynamic property" className="flex items-end">
            <Icon className="size-4">
              <path d="M5.500.5h5v5h5v5h-5v5h-5v-5h-5v-5h5z" fill="#2ad02a" stroke="#18a018" />
            </Icon>
            <Arrow dir="down" className="-ml-px size-[4px]" />
          </button>
          <button type="button" aria-label="Remove dynamic property">
            <Icon className="size-4">
              <rect x="0.500" y="6" width="15" height="4.500" rx="1" fill="#c9c9c9" stroke="#a8a8a8" />
            </Icon>
          </button>
          <button type="button" aria-label="Configure" className="flex items-end pl-1">
            <Icon className="size-4">
              <path d="M1.500 14.500l8-8" stroke="#6a6a6a" strokeWidth="2.400" strokeLinecap="round" />
              <path d="M13 1a3.500 3.500 0 1 0 2.500 4l-2.500.5-1.500-1.500z" fill="#8d8d8d" />
            </Icon>
            <Arrow dir="down" className="-ml-[3px] size-[4px]" />
          </button>
        </div>
      </div>
      <p className="mt-[5px] h-[15px] shrink-0 border border-[#cfcfcf] px-px leading-[13px]">cancel_goal_PB : QPushButton</p>
      <div className="relative mt-px flex min-h-0 flex-1 border border-[#c6c6c6] bg-white">
        <div className="min-w-0 flex-1 overflow-hidden">
          <table className="h-[299px] w-full table-fixed border-collapse text-left leading-3">
            <thead>
              <tr className="h-[14px] bg-linear-to-b from-[#fafafa] to-[#e6e6e6]">
                <th className="w-[101px] border-r border-b border-[#cdcdcd] px-px py-0 font-normal">Property</th>
                <th className="border-b border-[#cdcdcd] px-px py-0 font-normal">Value</th>
              </tr>
            </thead>
            <tbody>
              {properties.map((p) => (
                <tr key={p.name} className={toneClass[p.tone]}>
                  <td className={clsx("border-b border-[#cfcfb8] p-0", p.tone !== "section" && "border-r")}>
                    <span className="flex items-center pl-1 whitespace-nowrap">
                      <span className="flex w-[11px] items-center">
                        {p.expand && <Arrow dir="right" />}
                        {p.tone === "section" && <Arrow dir="down" />}
                      </span>
                      <span className={clsx(p.tone === "selected" && "font-bold")}>{p.name}</span>
                    </span>
                  </td>
                  <td className="border-b border-[#cfcfb8] p-0 pl-px">
                    {p.check ? (
                      <input
                        type="checkbox"
                        aria-label={p.name}
                        className="block size-[10px] appearance-none border border-[#c8c8c8] bg-white"
                      />
                    ) : (
                      p.value
                    )}
                  </td>
                </tr>
              ))}
            </tbody>
          </table>
        </div>
        <ScrollBar before={130} thumb={93} after={48} />
        <span className="pointer-events-none absolute top-[221px] left-[94px] h-[29px] w-[72px] border-2 border-[#2bb24c]" />
      </div>
    </section>
  );
}

function ResourceBrowser() {
  return (
    <section className="mt-1 flex shrink-0 flex-col">
      <DockTitle title="Resource Browser" />
      <div className="mt-[3px] flex h-[18px] items-center gap-[6px] pr-[3px] pl-[6px]">
        <button type="button" aria-label="Edit Resources">
          <Icon>
            <circle cx="8" cy="8" r="7.200" fill="#d8d8d8" stroke="#8a8a8a" />
            <circle cx="8" cy="8" r="4.800" fill="none" stroke="#444" strokeWidth="1.600" />
            <circle cx="8" cy="8" r="2" fill="none" stroke="#444" strokeWidth="1.300" />
          </Icon>
        </button>
        <button type="button" aria-label="Reload">
          <Icon>
            <path d="M12.500 3.800A6 6 0 1 0 13.800 10.500" fill="none" stroke="#1e80d0" strokeWidth="2.200" />
            <path d="M15.500.5v6.500H9z" fill="#1e80d0" />
          </Icon>
        </button>
        <input aria-label="Filter resources" placeholder="Filter" className={clsx(fieldClass, "ml-auto h-[18px] w-[131px]")} />
      </div>
      <div className="mt-[3px] grid h-[120px] grid-cols-2 gap-[3px]">
        <div className="border border-[#c6c6c6] bg-white pl-4 leading-3">&lt;resource root&gt;</div>
        <div className="border border-[#c6c6c6] bg-white" />
      </div>
      <div role="tablist" className="flex h-[19px] items-start border-t border-[#c6c6c6] leading-3">
        <button type="button" role="tab" className="h-[17px] border-r border-b border-l border-[#c4c4c4] bg-[#dcdcdc] px-[7px]">
          Signal/Slot Editor
        </button>
        <button type="button" role="tab" className="h-[17px] border-b border-[#c4c4c4] bg-[#dcdcdc] px-[7px]">
          Action Editor
        </button>
        <button
          type="button"
          role="tab"
          aria-selected="true"
          className="h-[18px] border-r border-b border-l border-[#c4c4c4] bg-[#f6f6f6] px-2"
        >
          Resource Browser
        </button>
      </div>
    </section>
  );
}

export default function App() {
  return (
    <div className="h-screen overflow-hidden bg-[#f8f8f8] pt-[5px] pr-[6px] pb-2 pl-[7px] font-['Noto_Sans','Open_Sans',sans-serif] text-[10px] leading-[14px] text-[#141414]">
      <div className="flex h-full flex-col overflow-hidden rounded-t-[10px] bg-[#efefef] shadow-[0_2px_9px_rgba(0,0,0,0.55)]">
        <TitleBar />
        <MenuBar />
        <ToolBar />
        <div className="flex min-h-0 flex-1 gap-1">
          <WidgetBox />
          <MdiArea />
          <aside className="flex w-[309px] shrink-0 flex-col pr-px">
            <ObjectInspector />
            <PropertyEditor />
            <ResourceBrowser />
          </aside>
        </div>
        <footer className="h-[14px] shrink-0" />
      </div>
    </div>
  );
}
